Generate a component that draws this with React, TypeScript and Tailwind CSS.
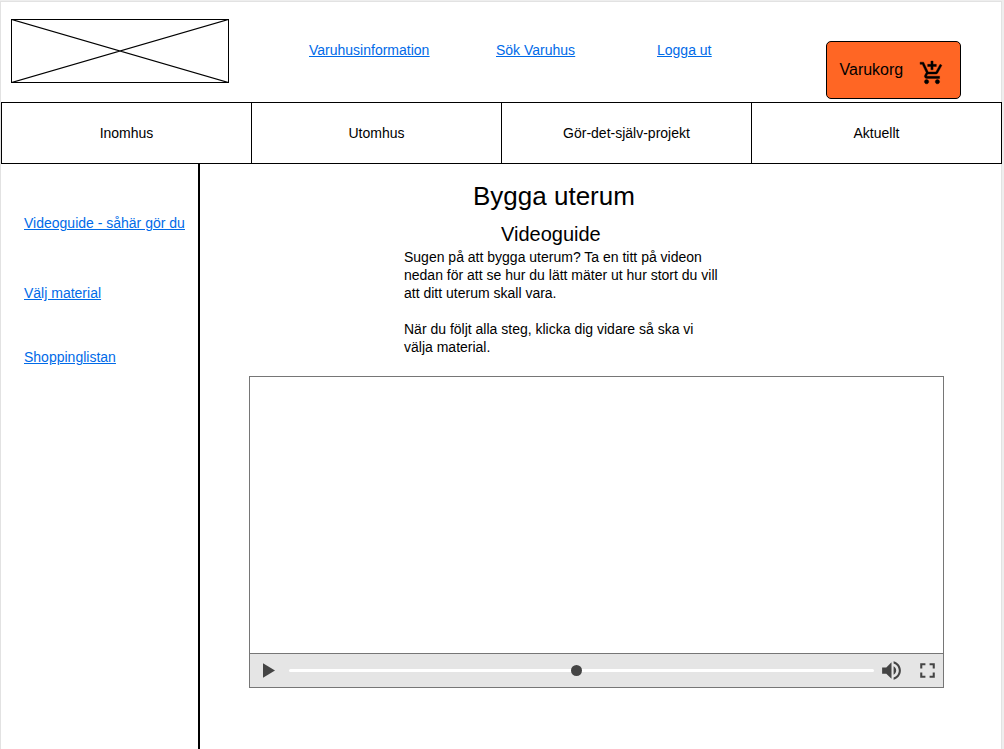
import React from "react";

const navItems = ["Inomhus", "Utomhus", "Gör-det-själv-projekt", "Aktuellt"];

function Logo() {
  return (
    <svg className="block h-16 w-[218px]" viewBox="0 0 218 64" fill="none" stroke="#000">
      <rect x="0.5" y="0.5" width="217" height="63" />
      <path d="M.5.5l217 63M.5 63.5l217-63" strokeWidth="1.3" />
    </svg>
  );
}

function CartIcon() {
  return (
    <svg className="mt-[5px] block size-[26px]" viewBox="0 0 24 24" fill="#000" stroke="#000" strokeWidth="0.35">
      <path d="M11 9h2V6h3V4h-3V1h-2v3H8v2h3v3zm-4 9c-1.1 0-1.99.9-1.99 2S5.900 22 7 22s2-.9 2-2-.9-2-2-2zm10 0c-1.1 0-1.99.9-1.99 2s.89 2 1.99 2 2-.9 2-2-.9-2-2-2zm-9.830-3.250l.03-.12.9-1.63h7.450c.75 0 1.410-.41 1.750-1.030l3.860-7.010L19.420 4h-.01l-1.100 2-2.760 5H8.530l-.13-.27L6.160 6l-.95-2-.94-2H1v2h2l3.600 7.590-1.350 2.450c-.16.28-.25.61-.25.96 0 1.100.9 2 2 2h12v-2H7.420c-.13 0-.25-.11-.25-.25z" />
    </svg>
  );
}

function Player() {
  return (
    <div className="mt-5 ml-[49px] flex h-[312px] w-[695px] flex-col border border-[#767676]">
      <div className="flex-1" />
      <div className="flex h-[34px] items-center border-t border-[#767676] bg-[#e5e5e5]">
        <svg className="ml-[13px] block h-[15px] w-3" viewBox="0 0 12 15" fill="#444">
          <path d="M0 0.3L12 7.5 0 14.7z" />
        </svg>
        <div className="ml-[14px] flex h-[3px] w-[585px] items-center rounded-full bg-white">
          <div className="ml-[282px] size-[11px] rounded-full bg-[#444]" />
        </div>
        <svg className="ml-[5px] block size-[25px]" viewBox="0 0 24 24" fill="#444">
          <path d="M3 9v6h4l5 5V4L7 9H3zm13.500 3c0-1.770-1.020-3.290-2.500-4.030v8.050c1.480-.730 2.500-2.250 2.500-4.020zM14 3.230v2.060c2.890.860 5 3.540 5 6.710s-2.110 5.850-5 6.710v2.060c4.010-.910 7-4.490 7-8.770s-2.990-7.860-7-8.770z" />
        </svg>
        <svg className="ml-[11px] block size-[25px]" viewBox="0 0 24 24" fill="#444">
          <path d="M7 14H5v5h5v-2H7v-3zm-2-4h2V7h3V5H5v5zm12 7h-3v2h5v-5h-2v3zM14 5v2h3v3h2V5h-5z" />
        </svg>
      </div>
    </div>
  );
}

export default function App() {
  return (
    <div className="h-[749px] w-[1004px] overflow-hidden bg-[#eeeeee] pt-px pr-0.5 font-['Liberation_Sans',Arial,sans-serif] text-sm text-black">
      <div className="flex h-[748px] flex-col border-t border-l border-[#e2e2e2]">
        <header className="flex h-[100px] shrink-0 items-start border-r border-[#e2e2e2] bg-white">
          <div className="mt-[17px] ml-[10px] w-[298px]">
            <Logo />
          </div>
          <nav className="mt-[39px] flex leading-[18px] text-[#006ae8] underline">
            <a className="w-[187px]">Varuhusinformation</a>
            <a className="w-[161px]">Sök Varuhus</a>
            <a className="w-[169px]">Logga ut</a>
          </nav>
          <button className="mt-[39px] flex h-[58px] w-[135px] items-center rounded-[5px] border border-black bg-[#ff6624] pl-[12.5px] text-base">
            <span className="w-[79.5px] text-left">Varukorg</span>
            <CartIcon />
          </button>
        </header>
        <nav className="flex h-[62px] shrink-0 border border-black bg-white">
          {navItems.map((item) => (
            <a key={item} className="flex w-[250px] items-center justify-center border-r border-black last:w-[249px] last:border-r-0">
              {item}
            </a>
          ))}
        </nav>
        <div className="flex flex-1 border-r border-[#e2e2e2] bg-white">
          <aside className="flex w-[199px] flex-col border-r-2 border-black pt-[50px] pl-[23px] leading-[18px] whitespace-nowrap text-[#006ae8] underline">
            <a>Videoguide - såhär gör du</a>
            <a className="mt-[52px]">Välj material</a>
            <a className="mt-[46px]">Shoppinglistan</a>
          </aside>
          <main>
            <h1 className="mt-4 ml-[273px] text-[26px] leading-8">Bygga uterum</h1>
            <h2 className="mt-2.5 ml-[301px] text-xl leading-6">Videoguide</h2>
            <div className="mt-0.5 ml-[204px] w-[330px] leading-[18px]">
              <p>Sugen på att bygga uterum? Ta en titt på videon<br />nedan för att se hur du lätt mäter ut hur stort du vill<br />att ditt uterum skall vara.</p>
              <p className="mt-[18px]">När du följt alla steg, klicka dig vidare så ska vi<br />välja material.</p>
            </div>
            <Player />
          </main>
        </div>
      </div>
    </div>
  );
}
